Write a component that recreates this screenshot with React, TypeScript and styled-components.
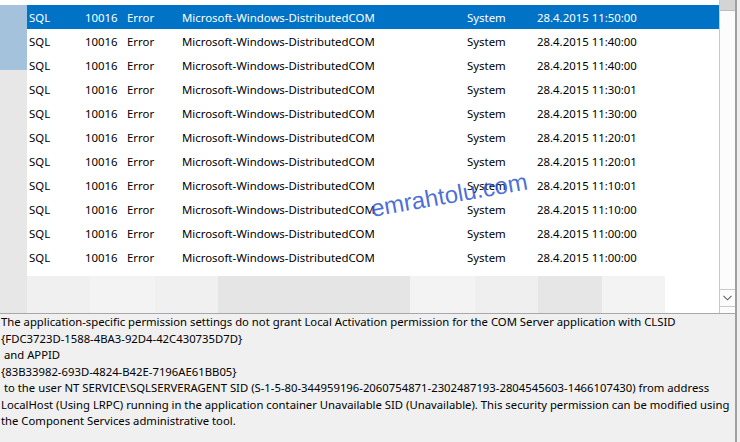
import React from "react";
import styled, { createGlobalStyle } from "styled-components";

const Global = createGlobalStyle`
  html, body { margin: 0; padding: 0; background: #f0f0f0; }
  body { font-family: "Noto Sans", "Open Sans", sans-serif; }
`;

const Window = styled.div`
  position: relative;
  width: 735px;
  height: 442px;
  display: flex;
  flex-direction: column;
  border-right: 2px solid #9f9f9f;
  background: #f0f0f0;
  overflow: hidden;
`;

const ListArea = styled.div`
  height: 313px;
  display: flex;
  background: #fff;
  border-bottom: 1px solid #a8a8a8;
`;

const LeftStrip = styled.div`
  width: 27px;
  display: flex;
  flex-direction: column;
`;

const StripPart = styled.div<{ $h?: number; $bg: string }>`
  height: ${(p) => (p.$h ? `${p.$h}px` : "auto")};
  flex: ${(p) => (p.$h ? "none" : "1")};
  background: ${(p) => p.$bg};
`;

const ListBody = styled.div`
  flex: 1;
  display: flex;
  flex-direction: column;
  overflow: hidden;
`;

const Rows = styled.div`
  height: 276px;
  padding-top: 5px;
  box-sizing: border-box;
  overflow: hidden;
  display: flex;
  flex-direction: column;
`;

const Row = styled.div<{ $sel?: boolean }>`
  height: 24px;
  flex: none;
  display: grid;
  grid-template-columns: 56px 42px 55px 285px 70px 1fr;
  align-items: center;
  padding-left: 2px;
  background: ${(p) => (p.$sel ? "#0073c7" : "#fff")};
  color: ${(p) => (p.$sel ? "#fff" : "#000")};
  font-size: 11.4px;
  white-space: nowrap;
`;

const Cell = styled.span`
  overflow: hidden;
`;

const Filler = styled.div`
  flex: 1;
  display: flex;
`;

const Block = styled.div<{ $w: number; $bg: string }>`
  width: ${(p) => p.$w}px;
  flex: none;
  background: ${(p) => p.$bg};
`;

const Scrollbar = styled.div`
  width: 15px;
  display: flex;
  flex-direction: column;
  border-left: 1px solid #c9c9c9;
  background: #fcfcfc;
`;

const Thumb = styled.div`
  height: 10px;
  background: #d4d4d4;
  border-bottom: 1px solid #bdbdbd;
`;

const Track = styled.div`
  flex: 1;
`;

const ArrowBox = styled.div`
  height: 16px;
  border-top: 1px solid #c9c9c9;
  border-bottom: 1px solid #c9c9c9;
  display: flex;
  align-items: center;
  justify-content: center;
  margin-bottom: 6px;
`;

const Detail = styled.div`
  flex: 1;
  padding: 0 0 0 1px;
  font-size: 11.3px;
  line-height: 16.5px;
  color: #000;
  white-space: pre;
`;

const Line = styled.div``;

const Watermark = styled.div`
  position: absolute;
  left: 371px;
  top: 195px;
  font-family: "Liberation Sans", Arial, sans-serif;
  font-size: 24px;
  color: rgba(45, 85, 210, 0.85);
  transform: rotate(-10deg);
  transform-origin: left center;
  pointer-events: none;
`;

const times = [
  "11:50:00",
  "11:40:00",
  "11:40:00",
  "11:30:01",
  "11:30:00",
  "11:20:01",
  "11:20:01",
  "11:10:01",
  "11:10:00",
  "11:00:00",
  "11:00:00",
];

const blocks: [number, string][] = [
  [63, "#f0f0f0"],
  [65, "#f3f3f3"],
  [63, "#f0f0f0"],
  [192, "#e5e5e5"],
  [65, "#f3f3f3"],
  [63, "#efefef"],
  [64, "#e6e6e6"],
  [63, "#f3f3f3"],
  [60, "#ffffff"],
];

const lines = [
  "The application-specific permission settings do not grant Local Activation permission for the COM Server application with CLSID",
  "{FDC3723D-1588-4BA3-92D4-42C430735D7D}",
  " and APPID ",
  "{83B33982-693D-4824-B42E-7196AE61BB05}",
  " to the user NT SERVICE\\SQLSERVERAGENT SID (S-1-5-80-344959196-2060754871-2302487193-2804545603-1466107430) from address",
  "LocalHost (Using LRPC) running in the application container Unavailable SID (Unavailable). This security permission can be modified using",
  "the Component Services administrative tool.",
];

export default function App() {
  return (
    <>
      <Global />
      <Window>
        <ListArea>
          <LeftStrip>
            <StripPart $h={5} $bg="#ffffff" />
            <StripPart $h={65} $bg="#a4c2dc" />
            <StripPart $bg="#e7e7e7" />
          </LeftStrip>
          <ListBody>
            <Rows>
              {times.map((t, i) => (
                <Row key={i} $sel={i === 0}>
                  <Cell>SQL</Cell>
                  <Cell>10016</Cell>
                  <Cell>Error</Cell>
                  <Cell>Microsoft-Windows-DistributedCOM</Cell>
                  <Cell>System</Cell>
                  <Cell>28.4.2015 {t}</Cell>
                </Row>
              ))}
            </Rows>
            <Filler>
              {blocks.map(([w, bg], i) => (
                <Block key={i} $w={w} $bg={bg} />
              ))}
            </Filler>
          </ListBody>
          <Scrollbar>
            <Thumb />
            <Track />
            <ArrowBox>
              <svg width="9" height="6" viewBox="0 0 9 6">
                <path d="M0.5 0.8 L4.5 4.8 L8.5 0.8" fill="none" stroke="#606060" strokeWidth="1.1" />
              </svg>
            </ArrowBox>
          </Scrollbar>
        </ListArea>
        <Detail>
          {lines.map((l, i) => (
            <Line key={i}>{l}</Line>
          ))}
        </Detail>
        <Watermark>emrahtolu.com</Watermark>
      </Window>
    </>
  );
}
